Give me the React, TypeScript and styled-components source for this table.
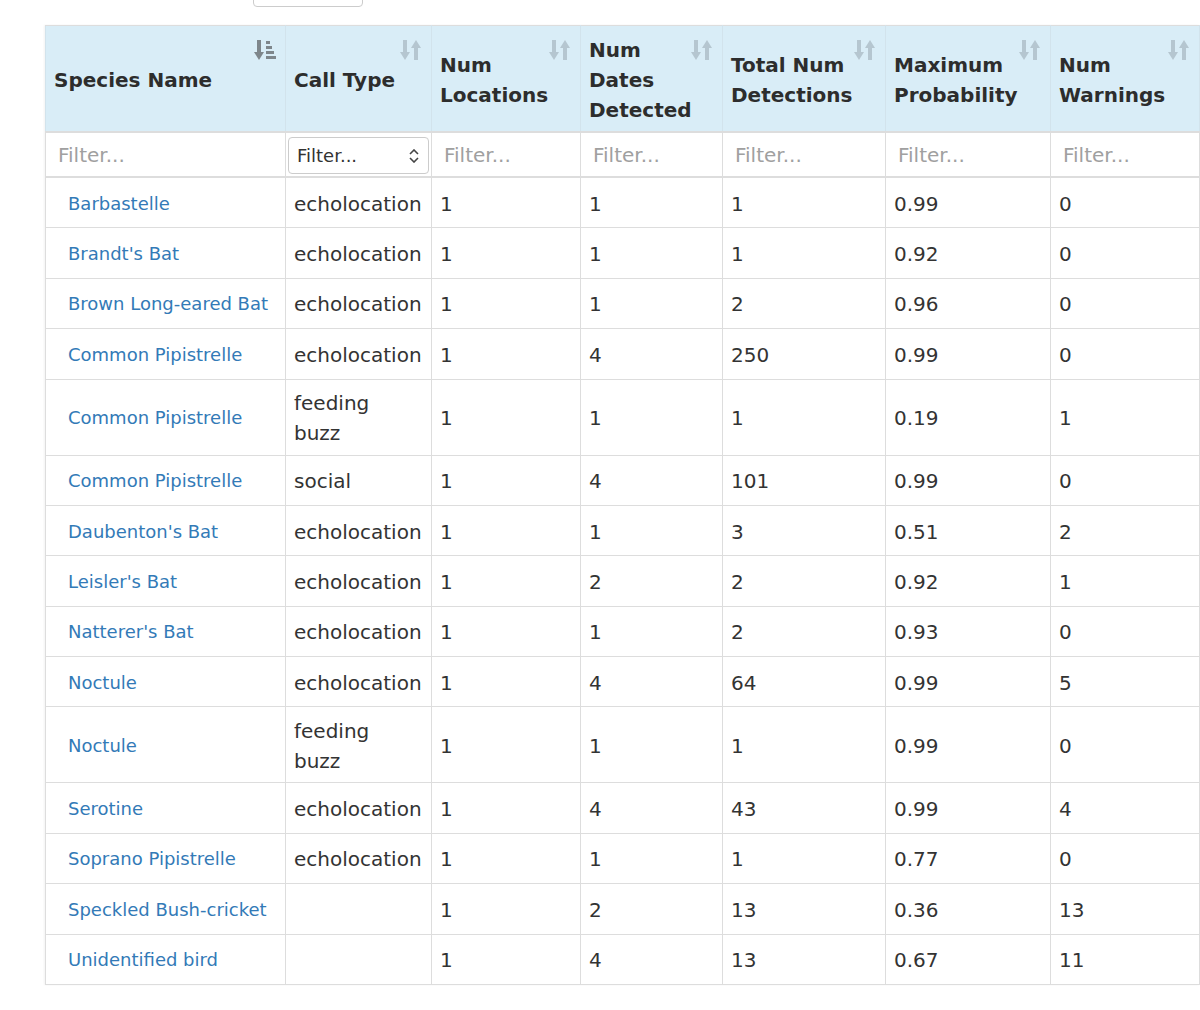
import React from 'react'
import styled, { createGlobalStyle } from 'styled-components'

type Row = {
    species: string
    callType: string
    locations: number
    dates: number
    detections: number
    probability: string
    warnings: number
}

const columns = [
    { title: 'Species Name', width: 240, active: true },
    { title: 'Call Type', width: 146 },
    { title: 'Num Locations', width: 149 },
    { title: 'Num Dates Detected', width: 142 },
    { title: 'Total Num Detections', width: 163 },
    { title: 'Maximum Probability', width: 165 },
    { title: 'Num Warnings', width: 149 }
]

const rows: Row[] = [
    { species: 'Barbastelle', callType: 'echolocation', locations: 1, dates: 1, detections: 1, probability: '0.99', warnings: 0 },
    { species: "Brandt's Bat", callType: 'echolocation', locations: 1, dates: 1, detections: 1, probability: '0.92', warnings: 0 },
    { species: 'Brown Long-eared Bat', callType: 'echolocation', locations: 1, dates: 1, detections: 2, probability: '0.96', warnings: 0 },
    { species: 'Common Pipistrelle', callType: 'echolocation', locations: 1, dates: 4, detections: 250, probability: '0.99', warnings: 0 },
    { species: 'Common Pipistrelle', callType: 'feeding buzz', locations: 1, dates: 1, detections: 1, probability: '0.19', warnings: 1 },
    { species: 'Common Pipistrelle', callType: 'social', locations: 1, dates: 4, detections: 101, probability: '0.99', warnings: 0 },
    { species: "Daubenton's Bat", callType: 'echolocation', locations: 1, dates: 1, detections: 3, probability: '0.51', warnings: 2 },
    { species: "Leisler's Bat", callType: 'echolocation', locations: 1, dates: 2, detections: 2, probability: '0.92', warnings: 1 },
    { species: "Natterer's Bat", callType: 'echolocation', locations: 1, dates: 1, detections: 2, probability: '0.93', warnings: 0 },
    { species: 'Noctule', callType: 'echolocation', locations: 1, dates: 4, detections: 64, probability: '0.99', warnings: 5 },
    { species: 'Noctule', callType: 'feeding buzz', locations: 1, dates: 1, detections: 1, probability: '0.99', warnings: 0 },
    { species: 'Serotine', callType: 'echolocation', locations: 1, dates: 4, detections: 43, probability: '0.99', warnings: 4 },
    { species: 'Soprano Pipistrelle', callType: 'echolocation', locations: 1, dates: 1, detections: 1, probability: '0.77', warnings: 0 },
    { species: 'Speckled Bush-cricket', callType: '', locations: 1, dates: 2, detections: 13, probability: '0.36', warnings: 13 },
    { species: 'Unidentified bird', callType: '', locations: 1, dates: 4, detections: 13, probability: '0.67', warnings: 11 }
]

function SortIcon({ active }: { active?: boolean }) {
    return (
        <SortGlyph active={active} viewBox="0 0 22 22" width="22" height="22">
            <path d="M3 1h4v12h3l-5 8-5-8h3z" />
            {active ? (
                <>
                    <rect x="12" y="2" width="4" height="3" />
                    <rect x="12" y="7" width="6" height="3" />
                    <rect x="12" y="12" width="8" height="3" />
                    <rect x="12" y="17" width="10" height="3" />
                </>
            ) : (
                <path d="M14 21h4V9h3l-5-8-5 8h3z" />
            )}
        </SortGlyph>
    )
}

function App() {
    return (
        <>
            <GlobalStyle />
            <Page>
                <TopBar>
                    <PartialButton />
                </TopBar>
                <Table>
                    <colgroup>
                        {columns.map((c) => (
                            <col key={c.title} style={{ width: c.width }} />
                        ))}
                    </colgroup>
                    <thead>
                        <tr>
                            {columns.map((c) => (
                                <HeadCell key={c.title}>
                                    {c.title}
                                    <IconSpot>
                                        <SortIcon active={c.active} />
                                    </IconSpot>
                                </HeadCell>
                            ))}
                        </tr>
                        <tr>
                            {columns.map((c) => (
                                <FilterCell key={c.title}>
                                    {c.title === 'Call Type' ? (
                                        <SelectWrap>
                                            <FilterSelect defaultValue="">
                                                <option value="">Filter...</option>
                                            </FilterSelect>
                                            <Chevron viewBox="0 0 10 14" width="10" height="14">
                                                <path d="M1 5l4-4 4 4M1 9l4 4 4-4" />
                                            </Chevron>
                                        </SelectWrap>
                                    ) : (
                                        <FilterInput placeholder="Filter..." />
                                    )}
                                </FilterCell>
                            ))}
                        </tr>
                    </thead>
                    <tbody>
                        {rows.map((r, i) => (
                            <tr key={i}>
                                <Cell>
                                    <SpeciesLink href="#">{r.species}</SpeciesLink>
                                </Cell>
                                <Cell narrow>{r.callType}</Cell>
                                <Cell>{r.locations}</Cell>
                                <Cell>{r.dates}</Cell>
                                <Cell>{r.detections}</Cell>
                                <Cell>{r.probability}</Cell>
                                <Cell>{r.warnings}</Cell>
                            </tr>
                        ))}
                    </tbody>
                </Table>
            </Page>
        </>
    )
}

export default App

const GlobalStyle = createGlobalStyle`
    body {
        margin: 0;
        background: #fff;
        color: #333;
        font-family: 'DejaVu Sans', Verdana, sans-serif;
    }
`

const Page = styled.div`
    padding: 0 0 24px 45px;
`

const TopBar = styled.div`
    height: 25px;
    display: flex;
    padding-left: 208px;
`

const PartialButton = styled.div`
    width: 110px;
    height: 18px;
    margin-top: -11px;
    box-sizing: border-box;
    border: 1px solid #ccc;
    border-radius: 4px;
    background: #fff;
`

const Table = styled.table`
    width: 1154px;
    border-collapse: collapse;
    table-layout: fixed;
    border: 1px solid #ddd;
    box-shadow: -1px 0 2px rgba(0, 0, 0, 0.05);
`

const HeadCell = styled.th`
    position: relative;
    padding: 9px 30px 6px 8px;
    background: #d9edf7;
    border: 1px solid #d2e3ec;
    border-top-color: #ddd;
    border-bottom: 2px solid #ddd;
    font-size: 20px;
    font-weight: bold;
    line-height: 30px;
    text-align: left;
    vertical-align: middle;
    color: #2d2d2d;
`

const IconSpot = styled.span`
    position: absolute;
    top: 13px;
    right: 9px;
    line-height: 0;
`

const SortGlyph = styled.svg<{ active?: boolean }>`
    fill: ${(p) => (p.active ? '#7e868b' : '#b5c6d0')};
`

const FilterCell = styled.td`
    padding: 2px;
    border: 1px solid #ddd;
    border-bottom: 2px solid #ddd;
    background: #fff;
`

const FilterInput = styled.input`
    display: block;
    width: 100%;
    height: 39px;
    box-sizing: border-box;
    padding: 0 10px;
    border: none;
    outline: none;
    font-family: inherit;
    font-size: 20px;
    color: #333;
    background: transparent;

    &::placeholder {
        color: #a0a0a0;
    }
`

const SelectWrap = styled.div`
    position: relative;
    padding-top: 1px;
`

const FilterSelect = styled.select`
    display: block;
    width: 100%;
    height: 37px;
    box-sizing: border-box;
    padding: 0 8px;
    border: 1px solid #ccc;
    border-radius: 4px;
    appearance: none;
    background: #fff;
    font-family: inherit;
    font-size: 18px;
    color: #333;
`

const Chevron = styled.svg`
    position: absolute;
    right: 10px;
    top: 13px;
    fill: none;
    stroke: #444;
    stroke-width: 1.6;
    pointer-events: none;
`

const Cell = styled.td<{ narrow?: boolean }>`
    padding: 8.5px ${(p) => (p.narrow ? '20px' : '8px')} 6.5px 8px;
    border: 1px solid #ddd;
    font-size: 20px;
    line-height: 30px;
    vertical-align: middle;
    color: #333;
    white-space: ${(p) => (p.narrow ? 'normal' : 'nowrap')};
`

const SpeciesLink = styled.a`
    display: inline-block;
    padding: 2.2px 14px;
    font-size: 18px;
    line-height: 30px;
    white-space: nowrap;
    color: #337ab7;
    text-decoration: none;
`
